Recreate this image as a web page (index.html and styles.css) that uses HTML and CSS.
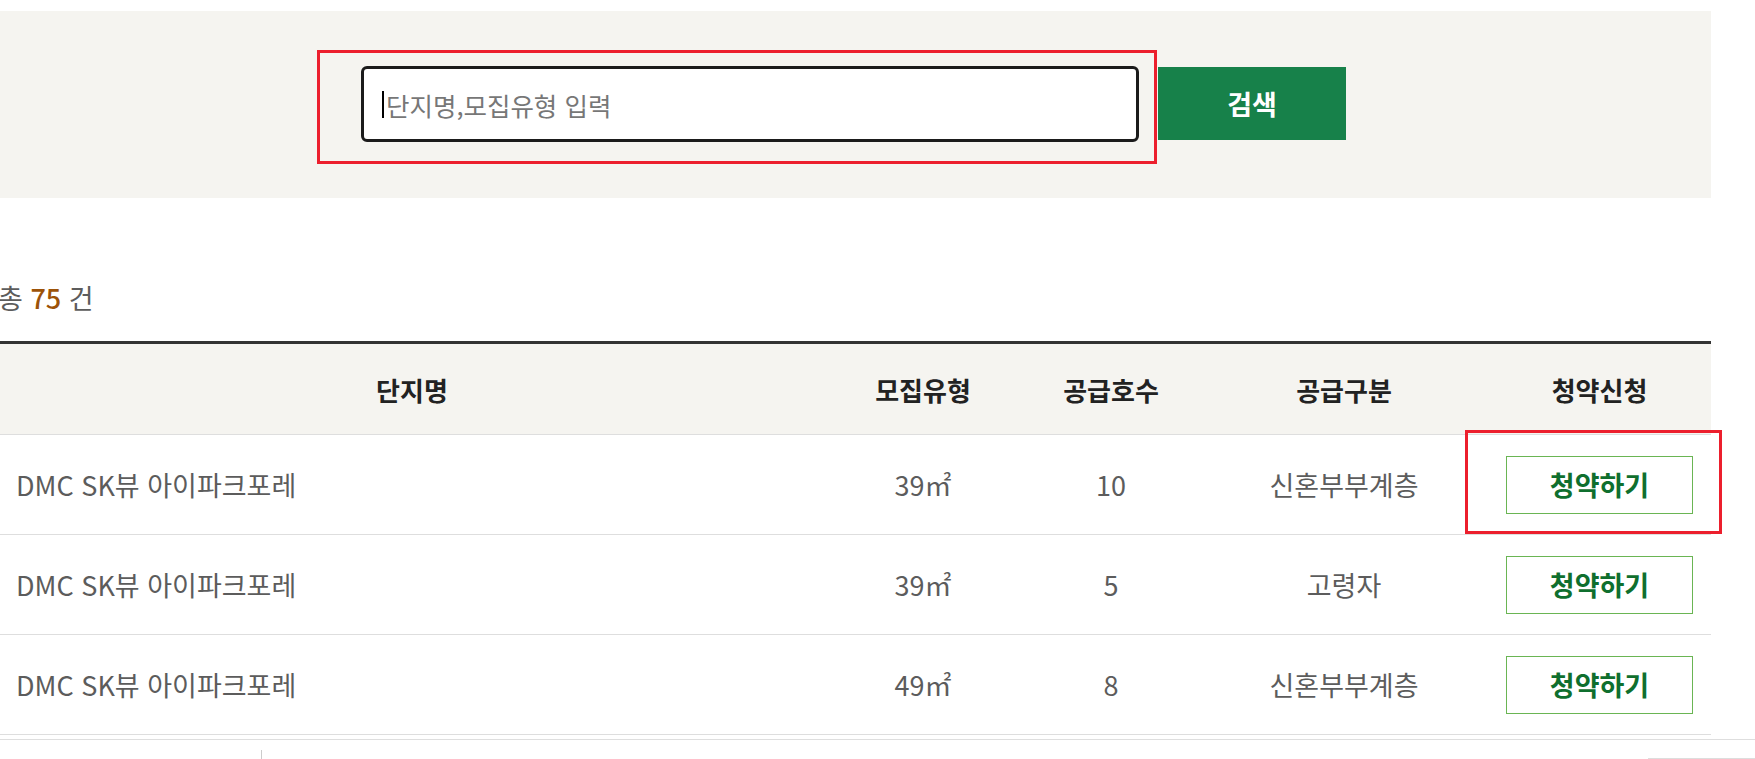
FILE: index.html
```html
<!DOCTYPE html>
<html lang="ko">
<head>
<meta charset="utf-8">
<title>청약 목록</title>
<link rel="stylesheet" href="styles.css">
</head>
<body>
<div class="page">
  <section class="search">
    <div class="field">
      <input class="search-input" type="text" placeholder="단지명,모집유형 입력" autofocus>
    </div>
    <button class="search-btn" type="button">검색</button>
  </section>

  <p class="count">총 <strong>75</strong> 건</p>

  <div class="list">
    <div class="row head">
      <div class="cell">단지명</div>
      <div class="cell">모집유형</div>
      <div class="cell">공급호수</div>
      <div class="cell">공급구분</div>
      <div class="cell">청약신청</div>
    </div>
    <div class="row">
      <div class="cell name">DMC SK뷰 아이파크포레</div>
      <div class="cell">39㎡</div>
      <div class="cell">10</div>
      <div class="cell">신혼부부계층</div>
      <div class="cell"><button class="apply" type="button">청약하기</button></div>
    </div>
    <div class="row">
      <div class="cell name">DMC SK뷰 아이파크포레</div>
      <div class="cell">39㎡</div>
      <div class="cell">5</div>
      <div class="cell">고령자</div>
      <div class="cell"><button class="apply" type="button">청약하기</button></div>
    </div>
    <div class="row">
      <div class="cell name">DMC SK뷰 아이파크포레</div>
      <div class="cell">49㎡</div>
      <div class="cell">8</div>
      <div class="cell">신혼부부계층</div>
      <div class="cell"><button class="apply" type="button">청약하기</button></div>
    </div>
  </div>

  <div class="foot">
    <span class="foot-bar"></span>
    <span class="foot-edge"></span>
  </div>

  <div class="mark mark-search"></div>
  <div class="mark mark-apply"></div>
</div>
</body>
</html>
```

FILE: styles.css
```css
html, body {
  margin: 0;
  padding: 0;
  background: #fff;
  overflow: hidden;
}

body {
  font-family: "Noto Sans CJK KR", "Noto Sans", sans-serif;
  color: #5c5c5c;
}

.page {
  position: relative;
  width: 1755px;
  height: 759px;
  box-sizing: border-box;
  padding-top: 11px;
}

/* search area */
.search {
  width: 1711px;
  height: 187px;
  box-sizing: border-box;
  background: #f5f4f0;
  display: flex;
  align-items: flex-start;
  padding: 55px 0 0 361px;
}

.field {
  position: relative;
}

.field::before {
  content: "";
  position: absolute;
  left: 21px;
  top: 25px;
  width: 2px;
  height: 27px;
  background: #000;
}

.search-input {
  display: block;
  width: 778px;
  height: 76px;
  box-sizing: border-box;
  border: 3px solid #1b1b1b;
  border-radius: 6px;
  background: #fff;
  padding: 0 0 0 22px;
  font-family: inherit;
  font-size: 25.5px;
  color: #222;
  outline: none;
  caret-color: transparent;
}

.search-input::placeholder {
  color: #777;
}

.search-btn {
  margin: 1px 0 0 19px;
  width: 188px;
  height: 73px;
  border: 0;
  background: #17814a;
  color: #fff;
  font-family: inherit;
  font-size: 27px;
  font-weight: 700;
  padding: 0;
}

/* count */
.count {
  margin: 83px 0 26px -2px;
  font-size: 27px;
  line-height: 34px;
  color: #5c5c5c;
}

.count strong {
  color: #9c5208;
  font-weight: 500;
}

/* list */
.list {
  width: 1711px;
  border-top: 3px solid #333;
}

.row {
  display: grid;
  grid-template-columns: 824px 198px 178px 288px 223px;
  height: 100px;
  box-sizing: border-box;
  border-bottom: 1px solid #dedede;
  align-items: center;
  font-size: 27px;
}

.row.head {
  height: 91px;
  background: #f5f4f0;
  color: #222;
  font-weight: 700;
  font-size: 26px;
}

.cell {
  text-align: center;
  display: flex;
  justify-content: center;
  align-items: center;
}

.cell.name {
  justify-content: flex-start;
  padding-left: 16px;
}

.apply {
  width: 187px;
  height: 58px;
  box-sizing: border-box;
  border: 1px solid #6ab553;
  background: #fff;
  color: #0f6f2e;
  font-family: inherit;
  font-size: 27px;
  font-weight: 700;
  padding: 0;
}

/* footer remnants */
.foot {
  margin-top: 4px;
  border-top: 1px solid #dedede;
  height: 19px;
  display: flex;
  justify-content: space-between;
  align-items: flex-end;
}

.foot-bar {
  margin-left: 261px;
  width: 1px;
  height: 9px;
  background: #ccc;
}

.foot-edge {
  width: 107px;
  height: 1px;
  background: #ddd;
}

/* annotation overlays */
.mark {
  position: absolute;
  border: 3px solid #ec1f2d;
  box-sizing: border-box;
}

.mark-search {
  left: 317px;
  top: 50px;
  width: 840px;
  height: 114px;
}

.mark-apply {
  left: 1465px;
  top: 430px;
  width: 257px;
  height: 104px;
}
```
